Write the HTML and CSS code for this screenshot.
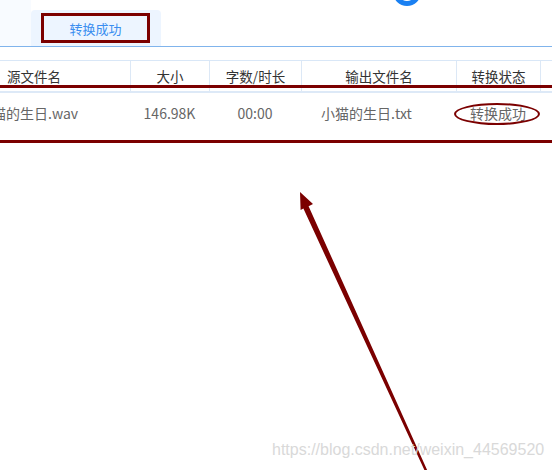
FILE: index.html
```html
<!DOCTYPE html>
<html lang="zh-CN">

<head>
    <meta charset="UTF-8">
    <title>转换列表</title>
    <meta name="viewport" content="width=device-width, initial-scale=1.0">
    <link rel="stylesheet" href="styles.css">
</head>

<body>

    <!-- top tab bar -->
    <div class="topbar">
        <div class="stub"></div>
        <div class="tab">
            <span class="tab-mark">转换成功</span>
        </div>
        <div class="ring"></div>
    </div>

    <!-- result table -->
    <div class="table">
        <div class="row head">
            <div class="cell first">源文件名</div>
            <div class="cell">大小</div>
            <div class="cell">字数/时长</div>
            <div class="cell">输出文件名</div>
            <div class="cell">转换状态</div>
            <div class="cell"></div>
        </div>
        <div class="row body">
            <div class="cell first src">小猫的生日.wav</div>
            <div class="cell">146.98K</div>
            <div class="cell">00:00</div>
            <div class="cell out">小猫的生日.txt</div>
            <div class="cell">转换成功</div>
            <div class="cell"></div>
        </div>
    </div>

    <!-- annotations -->
    <div class="mark-line line-top"></div>
    <div class="mark-line line-bottom"></div>
    <div class="mark-ellipse"></div>

    <svg class="arrow" width="552" height="470" viewBox="0 0 552 470">
        <polygon points="300,192 313,204 308.6,206.2 428,472 425.6,472.6 303.4,208.6 300.6,210" fill="#7b0000" />
    </svg>

    <div class="watermark">https://blog.csdn.net/weixin_44569520</div>

</body>

</html>
```

FILE: styles.css
```css
body {
    margin: 0;
    width: 552px;
    height: 470px;
    overflow: hidden;
    position: relative;
    background: #fff;
    font-family: "Noto Sans CJK SC", "Noto Sans", sans-serif;
}

.topbar {
    display: flex;
    height: 46px;
    border-bottom: 1px solid #80b4ec;
    position: relative;
}

.stub {
    width: 31px;
    background: #f8fbff;
}

.tab {
    width: 130px;
    margin-top: 10px;
    padding: 3px 0 0 10px;
    box-sizing: border-box;
    background: #edf5ff;
    border-radius: 4px 4px 0 0;
}

.tab-mark {
    display: flex;
    justify-content: center;
    align-items: center;
    width: 109px;
    height: 30px;
    box-sizing: border-box;
    border: 3px solid #7b0000;
    color: #3a8ef0;
    font-size: 13px;
}

.ring {
    position: absolute;
    left: 393px;
    top: -22px;
    width: 18px;
    height: 18px;
    border: 5px solid #1a80f2;
    border-radius: 50%;
}

.table {
    margin-top: 13px;
    border-top: 1px solid #d9e7f7;
}

.row {
    display: grid;
    grid-template-columns: 130px 79px 92px 155px 84px 1fr;
}

.head {
    height: 30px;
    border-bottom: 2px solid #dde9f7;
    color: #333;
    font-size: 13.5px;
}

.head .cell + .cell {
    border-left: 1px solid #dce8f6;
}

.body {
    height: 40px;
    color: #666;
    font-size: 14px;
}

.cell {
    display: flex;
    align-items: center;
    justify-content: center;
    white-space: nowrap;
}

.cell.first {
    justify-content: flex-start;
    padding-left: 7px;
}

.cell.src {
    padding-left: 0;
    margin-left: -22px;
}

.cell.out {
    padding-right: 24px;
}

.mark-line {
    position: absolute;
    left: 0;
    right: 0;
    height: 3px;
    background: #7b0000;
}

.line-top {
    top: 85px;
}

.line-bottom {
    top: 140px;
}

.mark-ellipse {
    position: absolute;
    left: 454px;
    top: 103px;
    width: 86px;
    height: 22px;
    box-sizing: border-box;
    border: 2.5px solid #7b0000;
    border-radius: 50%;
}

.arrow {
    position: absolute;
    left: 0;
    top: 0;
}

.watermark {
    position: absolute;
    left: 272px;
    top: 441px;
    color: #d9d9d9;
    font-family: "Liberation Sans", Arial, sans-serif;
    font-size: 16px;
}
```
